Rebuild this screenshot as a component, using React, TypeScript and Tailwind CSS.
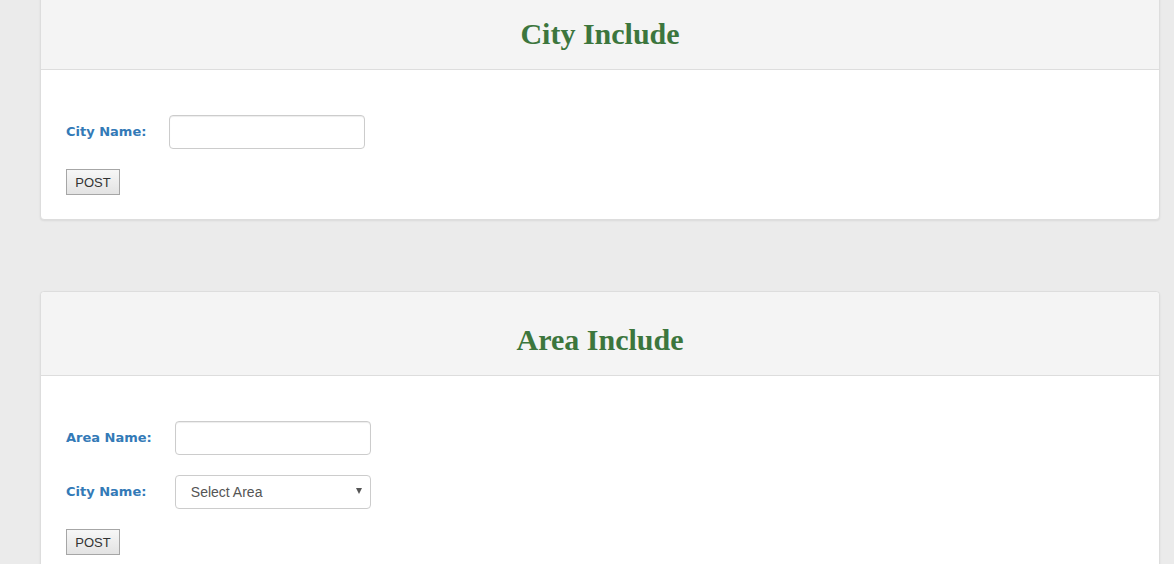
import React from "react";

const labelCls =
  "text-[13px] font-bold text-[#337ab7] [font-family:'Comic_Sans_MS','DejaVu_Sans',sans-serif] whitespace-nowrap";
const inputCls =
  "h-[34px] w-[196px] rounded-[4px] border border-[#ccc] bg-white px-3 text-[14px] text-[#555] outline-none shadow-[inset_0_1px_1px_rgba(0,0,0,0.075)]";
const btnCls =
  "h-[26px] w-[54px] border border-[#a6a6a6] bg-gradient-to-b from-[#f7f7f7] to-[#e3e3e3] pt-[1px] text-[13px] text-[#333] [font-family:'Liberation_Sans',Arial,sans-serif]";

function Panel({ title, children, className = "" }: { title: string; children: React.ReactNode; className?: string }) {
  return (
    <div
      className={
        "ml-[40px] w-[1120px] rounded-[4px] border border-[#ddd] bg-white shadow-[0_1px_2px_rgba(0,0,0,0.08)] " +
        className
      }
    >
      <div className="flex h-[84px] items-center justify-center rounded-t-[4px] border-b border-[#ddd] bg-[#f4f4f4] pt-[12px]">
        <h2 className="text-[30px] font-bold leading-none text-[#3c763d] [font-family:'Liberation_Serif','Times_New_Roman',serif]">
          {title}
        </h2>
      </div>
      <div className="pl-[25px] pt-[45px] pb-[24px]">{children}</div>
    </div>
  );
}

export default function App() {
  return (
    <div className="min-h-[564px] overflow-hidden bg-[#ebebeb] [font-family:'Liberation_Sans',Arial,sans-serif]">
      <Panel title="City Include" className="mt-[-15px]">
        <div className="grid grid-cols-[max-content_196px] items-center gap-x-[23px] gap-y-[20px] justify-start">
          <label className={labelCls}>City Name:</label>
          <input className={inputCls} />
          <div>
            <button className={btnCls}>POST</button>
          </div>
        </div>
      </Panel>

      <Panel title="Area Include" className="mt-[71px]">
        <div className="grid grid-cols-[max-content_196px] items-center gap-x-[23px] gap-y-[20px] justify-start">
          <label className={labelCls}>Area Name:</label>
          <input className={inputCls} />
          <label className={labelCls}>City Name:</label>
          <div className="relative h-[34px] w-[196px]">
            <select className="h-[34px] w-[196px] appearance-none rounded-[4px] border border-[#ccc] bg-white pl-[15px] text-[14px] text-[#555] outline-none [font-family:'Liberation_Sans',Arial,sans-serif]">
              <option>Select Area</option>
            </select>
            <span className="pointer-events-none absolute right-[9px] top-[13px] h-0 w-0 border-x-[3.5px] border-t-[6px] border-x-transparent border-t-[#555]" />
          </div>
          <div>
            <button className={btnCls}>POST</button>
          </div>
        </div>
      </Panel>
    </div>
  );
}
